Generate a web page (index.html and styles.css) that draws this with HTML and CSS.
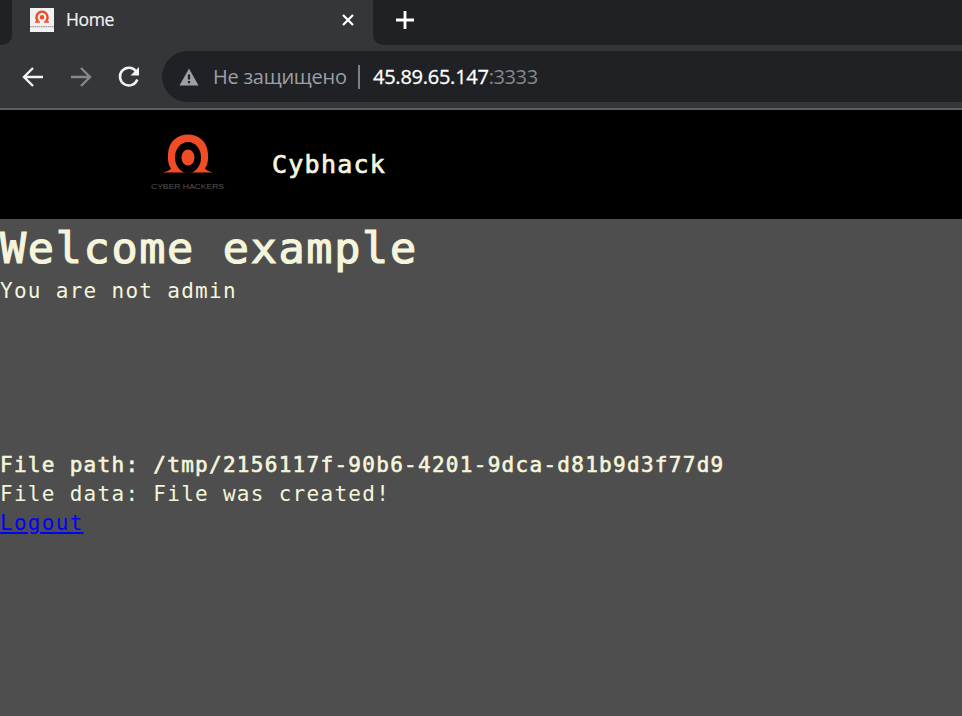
FILE: index.html
```html
<!DOCTYPE html>
<html lang="ru">
<head>
<meta charset="utf-8">
<title>Home</title>
<link rel="stylesheet" href="styles.css">
</head>
<body>
<div class="tabs">
  <div class="tab-prev"></div>
  <div class="tab">
    <svg class="favicon" viewBox="0 0 24 24"><rect width="24" height="24" fill="#f1f1f1"/><path d="M7.9 13.5C4.5 8.7 7.7 3.6 12 3.6S19.500 8.700 16.100 13.500" fill="none" stroke="#ef4a26" stroke-width="2.300"/><path d="M5 14h5M14 14h5" stroke="#ef4a26" stroke-width="1.500"/><circle cx="12" cy="9.300" r="2.200" fill="#ef4a26"/><path d="M0 18.600h24" stroke="#999" stroke-width="1.200" stroke-dasharray="1.500 .7"/></svg>
    <span class="tab-title">Home</span>
    <svg class="close" viewBox="0 0 12 12"><path d="M1 1l10 10M11 1L1 11" stroke="#fff" stroke-width="2.200"/></svg>
  </div>
  <div class="tab-rest"><svg class="plus" viewBox="0 0 18 18"><path d="M9 0v18M0 9h18" stroke="#fff" stroke-width="2.800"/></svg></div>
</div>
<div class="toolbar">
  <svg class="nav" viewBox="0 0 22 22"><path d="M21 11H3M11 2L2 11l9 9" fill="none" stroke="#f1f3f4" stroke-width="2.400"/></svg>
  <svg class="nav" viewBox="0 0 22 22"><path d="M1 11h18M11 2l9 9-9 9" fill="none" stroke="#86888b" stroke-width="2.400"/></svg>
  <svg class="nav" viewBox="0 0 22 22"><path d="M18 5.200A8.900 8.900 0 1 0 19.300 13.500" fill="none" stroke="#f1f3f4" stroke-width="2.500"/><path d="M21 1v8.500h-8.500z" fill="#f1f3f4"/></svg>
  <div class="address">
    <svg class="warn" viewBox="0 0 20 18"><path d="M10 0.500L19.500 17.500H.5z" fill="#9aa0a6"/><path d="M10 6.500v5M10 13v2.300" stroke="#202124" stroke-width="2.200"/></svg>
    <span class="insecure">Не защищено</span>
    <span class="divider"></span>
    <span class="host">45.89.65.147</span><span class="port">:3333</span>
  </div>
</div>
<header class="header">
  <svg class="logo" viewBox="0 0 76 60">
    <path fill="#f04c26" d="M13 39.500Q19 38 21 35.500C18 31 17.800 27 18 21C18.500 8 28 1.500 38 1.500S57.500 8 58 21C58.200 27 58 31 55 35.500Q57 38 63 39.500Z"/>
    <ellipse cx="38" cy="24.500" rx="13" ry="15.500" fill="#000"/>
    <ellipse cx="38" cy="24.500" rx="6.500" ry="8" fill="#f04c26"/>
    <text x="1" y="55.500" textLength="73" lengthAdjust="spacingAndGlyphs" class="logo-text">CYBER HACKERS</text>
  </svg>
  <span class="brand">Cybhack</span>
</header>
<main>
  <h1>Welcome example</h1>
  <p>You are not admin</p>
  <p class="path">File path: /tmp/2156117f-90b6-4201-9dca-d81b9d3f77d9</p>
  <p>File data: File was created!</p>
  <a href="#">Logout</a>
</main>
</body>
</html>
```
FILE: styles.css
```css
* { box-sizing: border-box; }
body { margin: 0; height: 716px; overflow: hidden; background: #4e4e4e; color: #f5f5dc; font-family: "DejaVu Sans Mono", monospace; }
svg { display: block; flex: none; }
.tabs { display: flex; height: 45px; background: #35363a; }
.tab-prev { width: 12px; background: #202124; border-bottom-right-radius: 10px; }
.tab { width: 361px; display: flex; align-items: center; padding: 0 19px 6px 18px; font-family: "Open Sans", sans-serif; color: #f1f3f4; }
.favicon { width: 24px; height: 24px; }
.tab-title { margin: -2px 0 0 12px; flex: 1; font-size: 17.5px; letter-spacing: -0.35px; -webkit-text-stroke: .2px #f1f3f4; }
.close { width: 12px; height: 12px; }
.tab-rest { flex: 1; background: #202124; border-bottom-left-radius: 10px; padding: 11px 0 0 23px; }
.plus { width: 18px; height: 18px; }
.toolbar { display: flex; height: 65px; background: #35363a; border-bottom: 2px solid #5d5e62; padding: 6px 0 6px 22px; align-items: center; gap: 26px; }
.nav { width: 22px; height: 22px; }
.address { flex: 1; margin-left: -4px; height: 51px; background: #202124; border-radius: 26px 0 0 26px; display: flex; align-items: center; padding-left: 17px; font-family: "Open Sans", sans-serif; font-size: 20px; white-space: nowrap; }
.warn { width: 20px; height: 18px; }
.insecure { margin-left: 14px; width: 134px; color: #9aa0a6; letter-spacing: -0.25px; }
.divider { width: 2px; height: 24px; margin: 0 13px 0 11px; background: #7c7f83; }
.host { color: #fff; letter-spacing: -0.25px; -webkit-text-stroke: .3px #fff; }
.port { color: #86898d; letter-spacing: -0.4px; }
.header { display: flex; height: 109px; background: #000; padding-left: 150px; }
.logo { width: 76px; height: 60px; margin-top: 23px; }
.logo-text { font: 7.5px "Liberation Sans", sans-serif; fill: #555; }
.brand { margin-left: 46px; line-height: 110px; font-size: 25px; letter-spacing: 1.25px; -webkit-text-stroke: .7px #f5f5dc; }
main { line-height: 29px; font-size: 21px; letter-spacing: 1.29px; white-space: nowrap; }
h1 { margin: 0; font-size: 43.5px; line-height: 58px; font-weight: normal; letter-spacing: 1.66px; -webkit-text-stroke: 1.2px #f5f5dc; }
p { margin: 0; }
.path { margin-top: 145px; -webkit-text-stroke: .6px #f5f5dc; }
a { color: #00f; display: inline-block; text-decoration-thickness: 2px; text-underline-offset: 2px; }
```
